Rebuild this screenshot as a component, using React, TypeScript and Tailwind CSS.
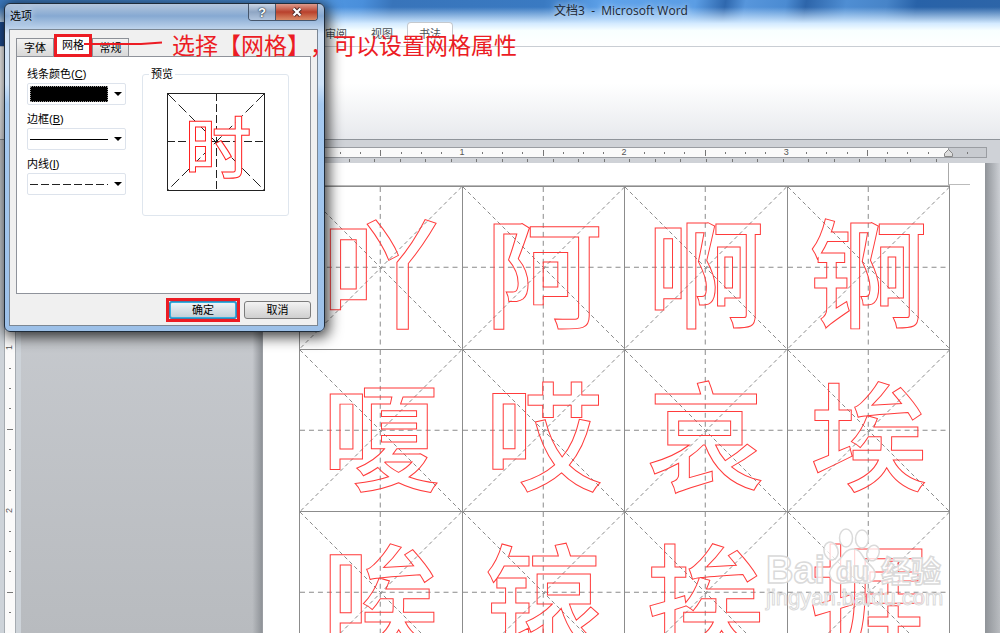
import type { ReactNode } from "react";
import { clsx } from "clsx";

const ROWS = [
  ["吖", "阿", "啊", "锕"],
  ["嗄", "哎", "哀", "埃"],
  ["唉", "锿", "挨", "捱"],
];

const CJK = "'Noto Sans CJK SC', 'Liberation Sans', sans-serif";

function Character({ char }: { char: string }) {
  return (
    <div className="aspect-square border-l border-t border-[#8c8c8c]">
      <svg viewBox="0 0 162 162" className="block h-full w-full overflow-visible">
        <g stroke="#8a8a8a" strokeWidth="1" strokeDasharray="4 3" fill="none">
          <path d="M0 0 162 162M162 0 0 162" />
          <path d="M80.500 0V162M0 80.500H162" strokeDasharray="5 4" />
        </g>
        <text
          x="81"
          y="132"
          textAnchor="middle"
          fontFamily={CJK}
          fontSize="118"
          fontWeight="500"
          fill="none"
          stroke="#ff3b3b"
          strokeWidth="1"
        >
          {char}
        </text>
      </svg>
    </div>
  );
}

function RulerMark({ step, vertical = false }: { step: number; vertical?: boolean }) {
  if (step % 8 === 0) {
    return (
      <span className={clsx("text-[9px] leading-none text-[#555]", vertical && "-rotate-90")}>
        {step / 8}
      </span>
    );
  }
  if (step % 4 === 0) {
    return <span className={clsx("bg-[#777]", vertical ? "h-px w-1.5" : "h-1.5 w-px")} />;
  }
  return <span className={clsx("bg-[#777]", vertical ? "h-px w-0.5" : "h-0.5 w-px")} />;
}

function HorizontalRuler() {
  return (
    <div className="bg-[#cfd2d7] pt-[7px]">
      <div className="ml-[21px] mr-[13px] flex h-[11px] border border-[#9a9da2] bg-[#fafafa]">
        <div className="w-[278px] shrink-0 bg-[#c8cbd0]" />
        <div className="flex min-w-0 flex-1 pl-[10px]">
          {Array.from({ length: 31 }).map((_, i) => (
            <span key={i} className="flex flex-1 items-center justify-center">
              <RulerMark step={i + 1} />
            </span>
          ))}
          <span className="w-[10px]" />
        </div>
        <div className="relative flex w-[38px] shrink-0 items-center justify-center border-l border-[#9a9da2] bg-[#c8cbd0]">
          <RulerMark step={1} />
          <svg viewBox="0 0 9 8" className="absolute -left-[5px] bottom-0 h-2 w-[9px]">
            <path d="M.5 7.500V4.500L4.500.5 8.500 4.500V7.500Z" fill="#ddd" stroke="#888" />
          </svg>
        </div>
      </div>
      <div className="ml-[311px] mr-[51px] flex h-[5px] items-center">
        {Array.from({ length: 25 }).map((_, i) => (
          <span key={i} className="flex flex-1 justify-center">
            <span className="h-[3px] w-px bg-[#777]" />
          </span>
        ))}
      </div>
    </div>
  );
}

function VerticalRuler() {
  return (
    <div className="flex w-[21px] shrink-0 overflow-hidden bg-[#cdd3d9] pl-1">
      <div className="w-3 border-x border-[#a5abb1] bg-[#fafafa] pt-8">
        {[0, 1, 2].map((unit) => (
          <div key={unit} className="flex h-[163px] flex-col">
            {Array.from({ length: 8 }).map((_, i) => {
              const step = unit * 8 + i + 1;
              return (
                <span key={i} className="flex min-h-0 flex-1 items-center justify-center">
                  {step < 24 && <RulerMark step={step} vertical />}
                </span>
              );
            })}
          </div>
        ))}
      </div>
    </div>
  );
}

function WordWindow() {
  return (
    <div className="flex h-screen flex-col overflow-hidden bg-[#cfd2d7]">
      <header className="bg-[linear-gradient(to_bottom,transparent_0,transparent_15%,#d3eaff_50%,#f8ffff_65%,#fff_100%),linear-gradient(100deg,#3b78bd_0%,#4f95e0_33%,#4a8fdb_36%,#3874ba_39%,#3a7ac2_54%,#5ea2ea_60%,#5b9de4_69%,#2f68ae_72%,#5796dc_74%,#4b8bd2_78%,#2d65aa_80%,#4f8ed3_84%,#4784c8_88%,#2862a8_91%,#2d65a8_100%)]">
        <h1 className="h-[22px] pl-[242px] text-center text-[12px] leading-[22px] text-[#1c2733] whitespace-pre font-['Open_Sans','Noto_Sans_CJK_SC',sans-serif] [text-shadow:0_0_6px_white]">
          {"文档3  -  Microsoft Word"}
        </h1>
        <nav className="flex h-[25px] border-b border-[#c9ced4] text-[11px] text-[#4a4f55]">
          <button className="w-[50px] bg-[#1f4f97] text-white">文件</button>
          <button className="ml-[263px] px-3">审阅</button>
          <button className="px-3">视图</button>
          <button className="ml-0.5 w-[46px] rounded-t border border-b-0 border-[#c5c9ce] bg-white">
            书法
          </button>
        </nav>
      </header>
      <div className="h-[93px] shrink-0 border-b border-[#8f949a] bg-linear-to-b from-white from-40% to-[#e7e9ed]" />
      <HorizontalRuler />
      <main className="flex min-h-0 flex-1">
        <VerticalRuler />
        <div className="grid min-w-0 flex-1 grid-cols-[241px_1fr_15px] bg-linear-to-b from-[#cdd0d5] to-[#b8bbbf]">
          <div className="bg-linear-to-l from-[#8f9398] to-transparent to-4%" />
          <article className="border-l border-[#9a9da2] bg-white">
            <div className="grid h-[22px] grid-cols-[36px_1fr_36px]">
              <span />
              <span className="border-r border-[#aaa]" />
              <span className="mr-[15px] border-b border-[#bbb]" />
            </div>
            <div className="ml-9 mr-[35px] grid grid-cols-4 border-r border-t border-[#8c8c8c] border-t-[#bbb]">
              {ROWS.flat().map((char) => (
                <Character key={char} char={char} />
              ))}
            </div>
          </article>
          <div className="bg-linear-to-r from-[#8f9398] to-transparent" />
        </div>
      </main>
    </div>
  );
}

interface ComboProps {
  id: string;
  label: string;
  hotkey: string;
  value: string;
  children: ReactNode;
}

function Combo({ id, label, hotkey, value, children }: ComboProps) {
  return (
    <div>
      <label htmlFor={id} className="block h-4 leading-4">
        {label}(<u>{hotkey}</u>)
      </label>
      <div className="relative mt-px h-[22px]">
        <select
          id={id}
          className="block h-full w-full appearance-none rounded-xs border border-[#dde3ec] bg-white text-transparent"
        >
          <option>{value}</option>
        </select>
        <div className="pointer-events-none absolute inset-0 flex items-center gap-1.5 pl-[3px]">
          <div className="w-[78px]">{children}</div>
          <svg viewBox="0 0 8 4" className="h-1 w-2">
            <path d="M0 0H8L4 4Z" fill="#000" />
          </svg>
        </div>
      </div>
    </div>
  );
}

function Preview() {
  return (
    <svg viewBox="0 0 98 98" className="mx-auto block w-[98px]">
      <rect x="0.500" y="0.500" width="97" height="97" fill="#fff" stroke="#222" />
      <g stroke="#222" fill="none">
        <path d="M49.500 0V98M0 48.500H98" strokeDasharray="8 3" />
        <path d="M1 1 97 97M97 1 1 97" strokeDasharray="11 4" />
      </g>
      <text
        x="51"
        y="80"
        textAnchor="middle"
        fontFamily={CJK}
        fontSize="67"
        fontWeight="500"
        fill="#fff"
        stroke="#ff2020"
        strokeWidth="1"
      >
        时
      </text>
    </svg>
  );
}

function OptionsDialog() {
  const tab = "border border-b-0 border-[#8c9097] bg-linear-to-b from-[#f3f3f3] to-[#d8d8d8]";

  return (
    <section
      role="dialog"
      aria-label="选项"
      className="absolute left-1 top-[3px] w-[321px] rounded-md border border-[#1f2c3a] bg-[linear-gradient(to_bottom,#b4c6dd_0,#86a9d2_12px,#d4e4f6_30px,#cfe3f8_80px,#a5c9f0_100px,#9cc0e8_100%)] pr-[6px] pb-[5px] pl-1 shadow-[2px_3px_14px_2px_rgba(0,0,0,0.75)]"
    >
      <header className="flex h-[25px] items-start justify-between">
        <h2 className="pl-px text-[11px] leading-6 text-black [text-shadow:0_0_6px_white]">选项</h2>
        <div className="flex h-[17px] overflow-hidden rounded-b border border-t-0 border-[#46566c]">
          <button
            aria-label="帮助"
            className="flex w-[26px] items-center justify-center bg-linear-to-b from-[#c9d5e5] via-[#8fa6c4] to-[#b1c5de] text-[13px] leading-none font-bold text-white font-['Liberation_Sans',sans-serif] [text-shadow:0_0_2px_#123,0_0_1px_#123]"
          >
            ?
          </button>
          <button
            aria-label="关闭"
            className="flex w-[42px] items-center justify-center border-l border-[#46566c] bg-linear-to-b from-[#dd9a8c] via-[#b8402c] to-[#d98a66]"
          >
            <svg viewBox="0 0 12 10" className="h-2.5 w-3">
              <path d="M2.500 1.500 9.500 8.500M9.500 1.500 2.500 8.500" stroke="#4b2a2a" strokeWidth="4" />
              <path d="M2.500 1.500 9.500 8.500M9.500 1.500 2.500 8.500" stroke="#fff" strokeWidth="2.200" />
            </svg>
          </button>
        </div>
      </header>

      <div className="border border-[#7b8794] bg-[#f0f0f0] px-[6px] pt-1 pb-[3px] text-[11px] text-black">
        <div role="tablist" className="flex items-end leading-4">
          <button role="tab" className={clsx(tab, "h-[18px] w-[38px]")}>
            字体
          </button>
          <button
            role="tab"
            aria-selected
            className="-mb-px h-[23px] w-[38px] border-[3px] border-[#ec1c24] bg-white leading-none"
          >
            网格
          </button>
          <button role="tab" className={clsx(tab, "h-[18px] w-[37px]")}>
            常规
          </button>
        </div>

        <div
          role="tabpanel"
          className="flex h-[238px] items-start gap-4 border border-[#8f939b] bg-white px-2.5 pt-[9px]"
        >
          <div className="flex w-[99px] flex-col gap-1.5">
            <Combo id="color" label="线条颜色" hotkey="C" value="黑色">
              <div className="h-4 border border-dotted border-[#999] bg-black" />
            </Combo>
            <Combo id="frame" label="边框" hotkey="B" value="实线">
              <div className="border-t border-black" />
            </Combo>
            <Combo id="inner" label="内线" hotkey="I" value="虚线">
              <svg viewBox="0 0 78 1" className="block h-px w-full">
                <path d="M0 .5H78" stroke="#222" strokeDasharray="8 3" />
              </svg>
            </Combo>
          </div>
          <fieldset className="h-[150px] w-[147px] rounded-[3px] border border-[#dfe6ee]">
            <legend className="ml-1.5 px-0.5 leading-4">预览</legend>
            <div className="pt-[11px]">
              <Preview />
            </div>
          </fieldset>
        </div>

        <footer className="flex items-start justify-end gap-1 pt-1">
          <span className="border-[3px] border-[#ec1c24]">
            <button className="block h-[18px] w-[68px] rounded-[3px] border-2 border-[#35b0e0] bg-linear-to-b from-[#eef3f6] to-[#c3d0d9] leading-[14px] outline-1 -outline-offset-1 outline-[#3c7fb1]">
              确定
            </button>
          </span>
          <button className="mt-[3px] h-[18px] w-[67px] rounded-[3px] border border-[#7c7c7c] bg-linear-to-b from-[#f3f3f3] to-[#cfcfcf] leading-4">
            取消
          </button>
        </footer>
      </div>
    </section>
  );
}

function Annotation() {
  return (
    <div className="pointer-events-none absolute left-[84px] top-[30px] flex items-center gap-[9px] text-[#ec1c24]">
      <svg viewBox="0 0 79 32" className="h-8 w-[79px]">
        <path d="M0 14H57L78 12.500" fill="none" stroke="currentColor" strokeWidth="2" />
      </svg>
      <p className="text-[23px] leading-8 whitespace-nowrap [text-spacing-trim:space-all]">
        选择【网格】，可以设置网格属性
      </p>
    </div>
  );
}

function Watermark() {
  return (
    <svg
      viewBox="0 0 186 88"
      className="pointer-events-none absolute right-[50px] bottom-[19px] h-[88px] w-[186px]"
      fill="#fff"
      fillOpacity="0.75"
      stroke="#dadada"
      strokeWidth="1.500"
      fontFamily={CJK}
      fontWeight="bold"
    >
      <ellipse cx="67" cy="25" rx="7" ry="9" transform="rotate(-15 67 25)" />
      <ellipse cx="82" cy="12" rx="6.500" ry="9" />
      <ellipse cx="98" cy="13" rx="6.500" ry="9" />
      <ellipse cx="109" cy="27" rx="6" ry="8" transform="rotate(20 109 27)" />
      <path d="M89 23c-8 0-10 8-16 13-6 5-9 9-7 14 2 7 9 8 15 7 6-1 10-1 16 0 7 1 13-1 14-7 1-6-3-9-8-14-5-5-6-13-14-13Z" />
      <text x="2" y="57" fontFamily="'Liberation Sans', sans-serif" fontSize="38">
        Bai
      </text>
      <text x="72" y="55" fontFamily="'Liberation Sans', sans-serif" fontSize="27">
        du
      </text>
      <text x="117" y="56" fontSize="30">
        经验
      </text>
      <text
        x="2"
        y="79"
        fontFamily="'Liberation Sans', sans-serif"
        fontSize="22"
        fontWeight="normal"
        strokeWidth="1"
      >
        jingyan.baidu.com
      </text>
    </svg>
  );
}

export default function App() {
  return (
    <div className="relative overflow-hidden font-['Liberation_Sans','Noto_Sans_CJK_SC',sans-serif]">
      <WordWindow />
      <Watermark />
      <OptionsDialog />
      <Annotation />
    </div>
  );
}
